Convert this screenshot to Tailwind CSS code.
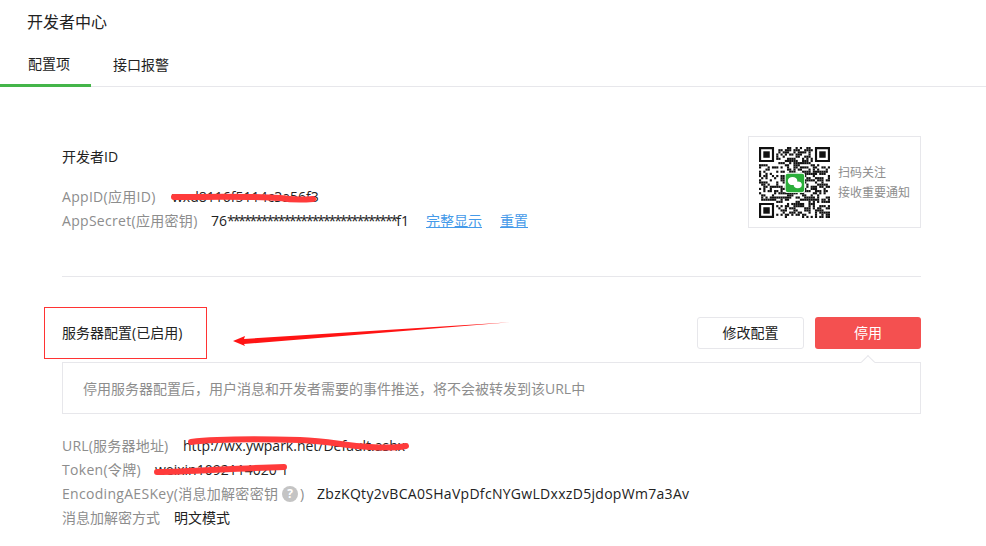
<!DOCTYPE html>
<html lang="zh">
<head>
    <meta charset="UTF-8">
    <title>开发者中心</title>
    <script src="https://cdn.jsdelivr.net/npm/@tailwindcss/browser@4"></script>
</head>
<body class="bg-white text-[#222] text-[14px] leading-6 font-['Open_Sans','Noto_Sans_CJK_SC',sans-serif]">
<div class="relative w-[986px] h-[546px] overflow-hidden">
    <!-- header -->
    <div class="h-[44px] pl-[27px] flex items-center text-[16px]">开发者中心</div>
    <div class="flex h-[43px] border-b border-[#e7e7eb]">
        <div class="w-[91px] h-[43px] pl-[28px] flex items-center border-b-[3px] border-[#44b549]">配置项</div>
        <div class="w-[100px] h-[42px] flex items-center justify-center">接口报警</div>
    </div>

    <div class="pl-[62px] w-[921px]">
        <!-- developer id -->
        <div class="flex justify-between items-start pt-[49px] h-[190px] border-b border-[#e7e7eb]">
            <div class="pt-[9px]">
                <div class="mb-[16px]">开发者ID</div>
                <div class="flex"><span class="w-[110px] tracking-[0.3px] text-[#8d8d8d]">AppID(应用ID)</span><span>wxd8116f5114c3a56f3</span></div>
                <div class="flex">
                    <span class="w-[149px] tracking-[0.3px] text-[#8d8d8d]">AppSecret(应用密钥)</span>
                    <span class="w-[215px]">76<span class="tracking-[-2.07px]">******************************</span>f1</span>
                    <a class="text-[#459ae9] underline mr-[18px]">完整显示</a>
                    <a class="text-[#459ae9] underline">重置</a>
                </div>
            </div>
            <div class="w-[173px] h-[92px] border border-[#e7e7eb] flex items-center pl-[10px] gap-[8px] text-[12px] text-[#8d8d8d]">
                <svg id="qr" class="w-[71px] h-[71px] shrink-0" viewBox="0 0 33 33"></svg>
                <div class="leading-[20px] whitespace-nowrap pt-[2px]">扫码关注<br>接收重要通知</div>
            </div>
        </div>

        <!-- server config -->
        <div class="flex justify-between items-center h-[32px] mt-[40px]">
            <div>服务器配置(已启用)</div>
            <div class="flex gap-[11px]">
                <button class="w-[107px] h-[32px] border border-[#e7e7eb] rounded-[3px] bg-white">修改配置</button>
                <button class="w-[106px] h-[32px] rounded-[3px] bg-[#f45050] text-white">停用</button>
            </div>
        </div>
        <div class="relative mt-[13px] h-[52px] border border-[#e7e7eb] pl-[20px] pt-[1px] flex items-center text-[#8d8d8d]">
            停用服务器配置后，用户消息和开发者需要的事件推送，将不会被转发到该URL中
            <div class="absolute right-[47px] -top-[6px] w-[10px] h-[10px] rotate-45 bg-white border-l border-t border-[#e7e7eb]"></div>
        </div>

        <div class="mt-[20px]">
            <div class="flex"><span class="w-[121px] tracking-[0.2px] text-[#8d8d8d]">URL(服务器地址)</span><span>http://wx.ywpark.net/Default.ashx</span></div>
            <div class="flex"><span class="w-[93px] tracking-[0.3px] text-[#8d8d8d]">Token(令牌)</span><span>weixin1092114020 1</span></div>
            <div class="flex items-center">
                <span class="w-[220px] whitespace-nowrap tracking-[0.3px] text-[#8d8d8d]">EncodingAESKey(消息加解密密钥</span>
                <span class="w-[16px] h-[16px] mr-[2px] rounded-full bg-[#c4c4c4] text-white text-[12px] font-bold leading-[16px] text-center">?</span>
                <span class="w-[17px] text-[#8d8d8d]">)</span>
                <span class="tracking-[0.3px]">ZbzKQty2vBCA0SHaVpDfcNYGwLDxxzD5jdopWm7a3Av</span>
            </div>
            <div class="flex"><span class="w-[112px] text-[#8d8d8d]">消息加解密方式</span><span>明文模式</span></div>
        </div>
    </div>

    <!-- annotations drawn over the screenshot -->
    <div class="absolute left-[44px] top-[307px] w-[163px] h-[52px] border border-[#ff3333]"></div>
    <svg class="absolute left-0 top-0 pointer-events-none" width="986" height="546" viewBox="0 0 986 546" fill="none">
        <path d="M233 341 L245 336 L244 339 L512 322 L244 344 L245 346 Z" fill="#ff1414"/>
        <g stroke="#ff3b3b" stroke-linecap="round" stroke-linejoin="round" fill="none" stroke-width="6">
            <path d="M174 197 C210 197 250 196 280 198 C292 200 300 200 313 199"/>
            <path d="M191 442 C215 439 260 439 300 440 C330 441 345 446 370 447 C385 448 395 448 406 446"/>
            <path d="M157 472 C190 472 235 468 284 467"/>
        </g>
    </svg>
</div>
<script>
    // qr code: finder squares plus fixed noise
    var svg = document.getElementById('qr');
    var n = 33, out = '', seed = 7;
    function rnd() { seed = (seed * 16807) % 2147483647; return seed / 2147483647; }
    function finder(x, y) {
        return '<path fill="#111" fill-rule="evenodd" d="M' + x + ' ' + y + 'h7v7h-7zM' + (x + 1) + ' ' + (y + 1) + 'v5h5v-5z"/><rect fill="#111" x="' + (x + 2) + '" y="' + (y + 2) + '" width="3" height="3"/>';
    }
    for (var y = 0; y < n; y++) {
        for (var x = 0; x < n; x++) {
            var v = rnd();
            if ((x < 8 && y < 8) || (x > 24 && y < 8) || (x < 8 && y > 24)) continue;
            if (v < 0.52) out += '<rect fill="#111" x="' + x + '" y="' + y + '" width="1" height="1"/>';
        }
    }
    out += finder(0, 0) + finder(26, 0) + finder(0, 26);
    // wechat badge
    out += '<rect x="12" y="12" width="9.4" height="9.4" rx="1" fill="#fff"/><rect x="12.4" y="12.4" width="8.6" height="8.6" rx="1" fill="#2aae3a"/>';
    out += '<ellipse cx="15.6" cy="15.8" rx="2.2" ry="1.9" fill="#fff"/><ellipse cx="18" cy="17.6" rx="1.9" ry="1.6" fill="#fff"/>';
    svg.innerHTML = out;
</script>
</body>
</html>
